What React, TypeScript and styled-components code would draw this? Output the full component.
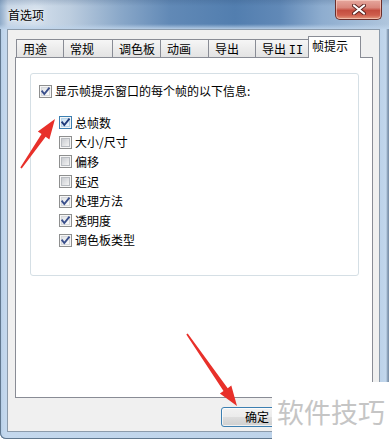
import React from "react";
import styled, { createGlobalStyle } from "styled-components";

const Global = createGlobalStyle`
  html, body { margin: 0; padding: 0; background: #fff; }
  body { font-family: "Noto Sans CJK SC", "Liberation Sans", sans-serif; font-size: 12px; color: #000; }
`;

const Page = styled.div`
  position: relative;
  width: 389px;
  height: 441px;
  overflow: hidden;
  background: #fff;
`;

const Window = styled.div`
  width: 389px;
  height: 439px;
  display: flex;
  flex-direction: column;
  background: linear-gradient(90deg, #a9c4e1 0, #bdd3ea 2px, #c4d8ed 5px, #bcd2e9 380px, #c2d7ec 386px, #7d93ab 388px);
  border-radius: 0 0 0 6px;
  box-shadow: inset 1px 0 #61788f, inset 0 -1px #61788f;
`;

const TitleBar = styled.div`
  height: 29px;
  flex: none;
  display: flex;
  align-items: flex-start;
  padding-left: 8px;
  background:
    linear-gradient(180deg, rgba(40, 70, 110, 0.18) 0, rgba(255, 255, 255, 0) 6px, rgba(255, 255, 255, 0) 24px, rgba(189, 211, 234, 0.9) 29px),
    linear-gradient(90deg, #8fabc9 0px, #c6d5e6 8px, #d3dfec 34px, #bccddf 70px, #8aa8c9 120px, #6189b6 170px, #527eaf 235px, #6189b7 280px, #8eadcf 322px, #b0c6dd 389px);
`;

const Title = styled.span`
  margin-top: 7px;
  font-size: 12px;
  line-height: 16px;
  color: #000;
  text-shadow: 0 0 6px rgba(255, 255, 255, 0.9), 0 0 2px rgba(255, 255, 255, 0.9);
`;

const CloseButton = styled.div`
  margin-left: auto;
  margin-right: 7px;
  width: 47px;
  height: 20px;
  box-sizing: border-box;
  border: 1px solid #6b2e2a;
  border-top: none;
  border-radius: 0 0 5px 5px;
  background: linear-gradient(180deg, #e6a79d 0, #d9877c 40%, #c44d3f 55%, #cf5e4d 80%, #e39a7f 100%);
  box-shadow: inset 0 0 0 1px rgba(255, 220, 210, 0.55);
  display: flex;
  align-items: center;
  justify-content: center;
`;

const Client = styled.div`
  margin: 0 9px 0 7px;
  height: 403px;
  box-sizing: border-box;
  border: 1px solid #8c9bab;
  background: #f0f0f0;
  display: flex;
  flex-direction: column;
`;

const TabStrip = styled.div`
  display: flex;
  align-items: flex-end;
  padding-left: 8px;
  margin-top: 6px;
  position: relative;
  z-index: 2;
`;

const Tab = styled.div<{ $active?: boolean; $w: number }>`
  width: ${(p) => p.$w}px;
  box-sizing: border-box;
  height: ${(p) => (p.$active ? 22 : 18)}px;
  border: 1px solid #898c95;
  border-bottom: none;
  margin-right: -1px;
  margin-left: ${(p) => (p.$active ? -1 : 0)}px;
  margin-bottom: ${(p) => (p.$active ? -1 : 0)}px;
  background: ${(p) => (p.$active ? "#fff" : "linear-gradient(180deg, #f6f6f6 0, #ececec 50%, #e3e3e3 100%)")};
  padding-left: ${(p) => (p.$active ? 3 : 6)}px;
  line-height: ${(p) => (p.$active ? 18 : 17)}px;
  font-size: 12px;
  white-space: nowrap;
  position: relative;
  z-index: ${(p) => (p.$active ? 3 : 1)};
`;

const Latin = styled.span`
  font-family: "Liberation Mono", monospace;
  font-size: 12px;
`;

const Panel = styled.div`
  margin: 0 6px 0 7px;
  height: 341px;
  box-sizing: border-box;
  border: 1px solid #898c95;
  background: #fff;
  padding: 15px 0 0 14px;
  position: relative;
  z-index: 1;
`;

const Group = styled.div`
  width: 329px;
  height: 203px;
  box-sizing: border-box;
  border: 1px solid #d5dfe5;
  border-radius: 3px;
  padding: 7px 0 0 8px;
`;

const Row = styled.label<{ $h?: number }>`
  display: flex;
  align-items: center;
  gap: 3px;
  height: ${(p) => p.$h ?? 20}px;
  font-size: 12px;
  line-height: 14px;
  white-space: nowrap;
`;

const SubList = styled.div`
  margin-top: 12px;
  padding-left: 20px;
  display: flex;
  flex-direction: column;
`;

const Box = styled.span<{ $checked?: boolean; $hot?: boolean }>`
  position: relative;
  flex: none;
  width: 13px;
  height: 13px;
  box-sizing: border-box;
  border: 1px solid ${(p) => (p.$hot ? "#3c7fb1" : "#8e8f8f")};
  background: #f6f6f6;
  &::before {
    content: "";
    position: absolute;
    inset: 1px;
    border: 1px solid ${(p) => (p.$hot ? "#b6d4ea" : p.$checked ? "#d6d8db" : "#b8bcc1")};
    background: ${(p) =>
      p.$hot
        ? "linear-gradient(135deg, #c8dff1, #eef6fc)"
        : p.$checked
        ? "linear-gradient(135deg, #e1e3e6, #fbfbfb)"
        : "linear-gradient(135deg, #c9ccd1, #f3f3f3)"};
  }
  svg {
    position: absolute;
    left: -1px;
    top: -1px;
  }
`;

const ButtonRow = styled.div`
  margin-top: 9px;
  display: flex;
  justify-content: flex-end;
  padding-right: 88px;
`;

const Button = styled.div<{ $default?: boolean }>`
  width: 70px;
  height: 20px;
  box-sizing: border-box;
  border: 1px solid ${(p) => (p.$default ? "#3c7fb1" : "#707070")};
  border-radius: 3px;
  background: linear-gradient(180deg, #f2f2f2 0, #ebebeb 48%, #dddddd 52%, #cfcfcf 100%);
  box-shadow: inset 0 0 0 1px rgba(255, 255, 255, 0.7);
  display: flex;
  align-items: center;
  justify-content: center;
  font-size: 12px;
  line-height: 14px;
  padding-left: 2px;
`;

const Watermark = styled.div`
  position: absolute;
  z-index: 5;
  left: 272px;
  top: 382px;
  width: 117px;
  height: 59px;
  box-sizing: border-box;
  background: #fff;
  padding: 16px 0 0 5px;
  font-size: 27px;
  line-height: 27px;
  color: #c5c5c5;
  white-space: nowrap;
`;

const Overlay = styled.svg`
  position: absolute;
  z-index: 10;
  left: 0;
  top: 0;
  pointer-events: none;
`;

const Check = ({ hot }: { hot?: boolean }) => (
  <svg width="13" height="13" viewBox="0 0 13 13">
    <path d="M3.2 6.4 L5.3 9 L9.9 3.4" fill="none" stroke={hot ? "#1f3a7a" : "#3a4f8c"} strokeWidth="1.9" strokeLinecap="square" />
  </svg>
);

const CheckBox = ({ checked, hot }: { checked?: boolean; hot?: boolean }) => (
  <Box $checked={checked} $hot={hot}>
    {checked && <Check hot={hot} />}
  </Box>
);

const tabs: { label: string; latin?: string; w: number; active?: boolean }[] = [
  { label: "用途", w: 48 },
  { label: "常规", w: 50 },
  { label: "调色板", w: 49 },
  { label: "动画", w: 49 },
  { label: "导出", w: 48 },
  { label: "导出 ", latin: "II", w: 55 },
  { label: "帧提示", w: 53, active: true },
];

const items: { label: string; checked: boolean; hot?: boolean }[] = [
  { label: "总帧数", checked: true, hot: true },
  { label: "大小/尺寸", checked: false },
  { label: "偏移", checked: false },
  { label: "延迟", checked: false },
  { label: "处理方法", checked: true },
  { label: "透明度", checked: true },
  { label: "调色板类型", checked: true },
];

export default function App() {
  return (
    <Page>
      <Global />
      <Window>
        <TitleBar>
          <Title>首选项</Title>
          <CloseButton>
            <svg width="14" height="11" viewBox="0 0 14 11">
              <path d="M2 1.5 L12 9.5 M12 1.5 L2 9.5" stroke="#5a2320" strokeWidth="4" strokeLinecap="round" />
              <path d="M2 1.5 L12 9.5 M12 1.5 L2 9.5" stroke="#ffffff" strokeWidth="2.2" strokeLinecap="round" />
            </svg>
          </CloseButton>
        </TitleBar>
        <Client>
          <TabStrip>
            {tabs.map((t, i) => (
              <Tab key={i} $w={t.w} $active={t.active}>
                {t.label}
                {t.latin && <Latin>{t.latin}</Latin>}
              </Tab>
            ))}
          </TabStrip>
          <Panel>
            <Group>
              <Row>
                <CheckBox checked />
                显示帧提示窗口的每个帧的以下信息:
              </Row>
              <SubList>
                {items.map((it) => (
                  <Row key={it.label} $h={19.6}>
                    <CheckBox checked={it.checked} hot={it.hot} />
                    {it.label}
                  </Row>
                ))}
              </SubList>
            </Group>
          </Panel>
          <ButtonRow>
            <Button $default>确定</Button>
          </ButtonRow>
        </Client>
      </Window>
      <Watermark>软件技巧</Watermark>
      <Overlay width="389" height="441" viewBox="0 0 389 441">
        <polygon
          points="20.3,167.5 41.55,134 37.85,131.4 55,119 49.35,139.4 45.65,136.8 21.7,168.5"
          fill="#e8302a"
        />
        <polygon
          points="187.7,333.5 227.7,388.2 231.3,385.6 237,406 219.9,393.6 223.5,391 186.3,334.5"
          fill="#e8302a"
        />
      </Overlay>
    </Page>
  );
}
